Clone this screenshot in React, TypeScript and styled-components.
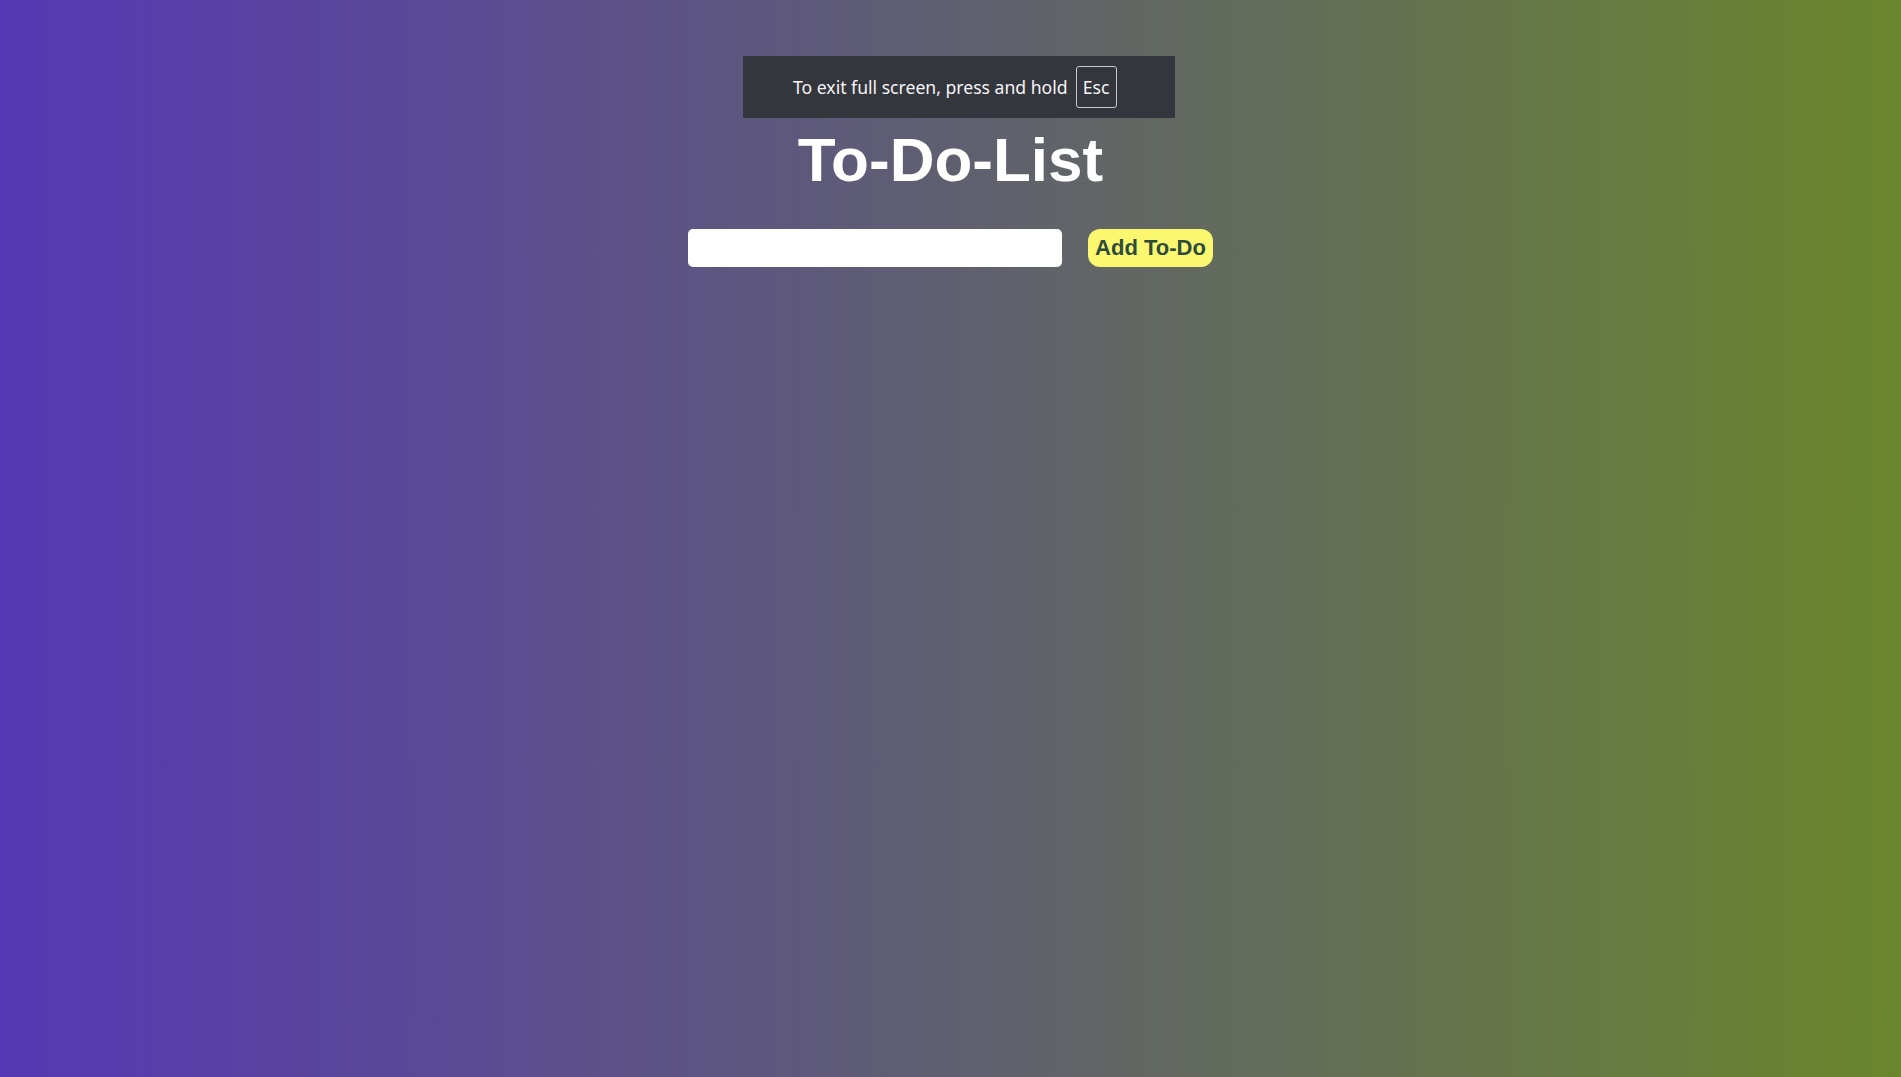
import React, { useState } from "react";
import styled, { createGlobalStyle } from "styled-components";

const GlobalStyle = createGlobalStyle`
  html, body {
    margin: 0;
    padding: 0;
  }
  body {
    font-family: "Liberation Sans", Arial, sans-serif;
  }
`;

const Page = styled.div`
  min-height: 100vh;
  background: linear-gradient(to right, #5538b5, #6a862c);
  display: flex;
  flex-direction: column;
  align-items: center;
  padding-top: 125px;
  box-sizing: border-box;
  position: relative;
`;

const Title = styled.h1`
  margin: 0;
  color: #ffffff;
  font-family: "Liberation Sans", Arial, sans-serif;
  font-weight: 700;
  font-size: 62px;
  line-height: 70px;
`;

const Form = styled.form`
  display: flex;
  align-items: center;
  gap: 26px;
  margin-top: 34px;
`;

const TodoInput = styled.input`
  width: 374px;
  height: 38px;
  box-sizing: border-box;
  border: none;
  border-radius: 5px;
  background: #ffffff;
  padding: 0 10px;
  font-size: 18px;
  font-family: "Liberation Sans", Arial, sans-serif;
  outline: none;
`;

const AddButton = styled.button`
  height: 38px;
  width: 125px;
  box-sizing: border-box;
  border: none;
  border-radius: 12px;
  background: #fbf86f;
  color: #2c4b3c;
  font-family: "Liberation Sans", Arial, sans-serif;
  font-weight: 700;
  font-size: 22px;
  padding: 0;
  cursor: pointer;
`;

const TodoList = styled.ul`
  list-style: none;
  margin: 20px 0 0;
  padding: 0;
  color: #ffffff;
`;

const FullscreenNotice = styled.div`
  position: absolute;
  top: 56px;
  left: 743px;
  width: 432px;
  height: 62px;
  box-sizing: border-box;
  background: #34363e;
  display: flex;
  align-items: center;
  padding-left: 50px;
  gap: 8px;
  color: #f4f4f4;
  font-family: "Noto Sans", "Open Sans", sans-serif;
  font-size: 17.6px;
`;

const KeyBox = styled.span`
  display: inline-flex;
  align-items: center;
  justify-content: center;
  width: 41px;
  height: 42px;
  box-sizing: border-box;
  border: 1px solid #c9c9cc;
  border-radius: 3px;
`;

export default function App() {
  const [text, setText] = useState("");
  const [todos, setTodos] = useState<string[]>([]);

  const handleSubmit = (e: React.FormEvent) => {
    e.preventDefault();
    if (!text.trim()) return;
    setTodos([...todos, text.trim()]);
    setText("");
  };

  return (
    <>
      <GlobalStyle />
      <Page>
        <FullscreenNotice>
          <span>To exit full screen, press and hold</span>
          <KeyBox>Esc</KeyBox>
        </FullscreenNotice>
        <Title>To-Do-List</Title>
        <Form onSubmit={handleSubmit}>
          <TodoInput value={text} onChange={(e) => setText(e.target.value)} />
          <AddButton type="submit">Add To-Do</AddButton>
        </Form>
        {todos.length > 0 && (
          <TodoList>
            {todos.map((t, i) => (
              <li key={i}>{t}</li>
            ))}
          </TodoList>
        )}
      </Page>
    </>
  );
}
